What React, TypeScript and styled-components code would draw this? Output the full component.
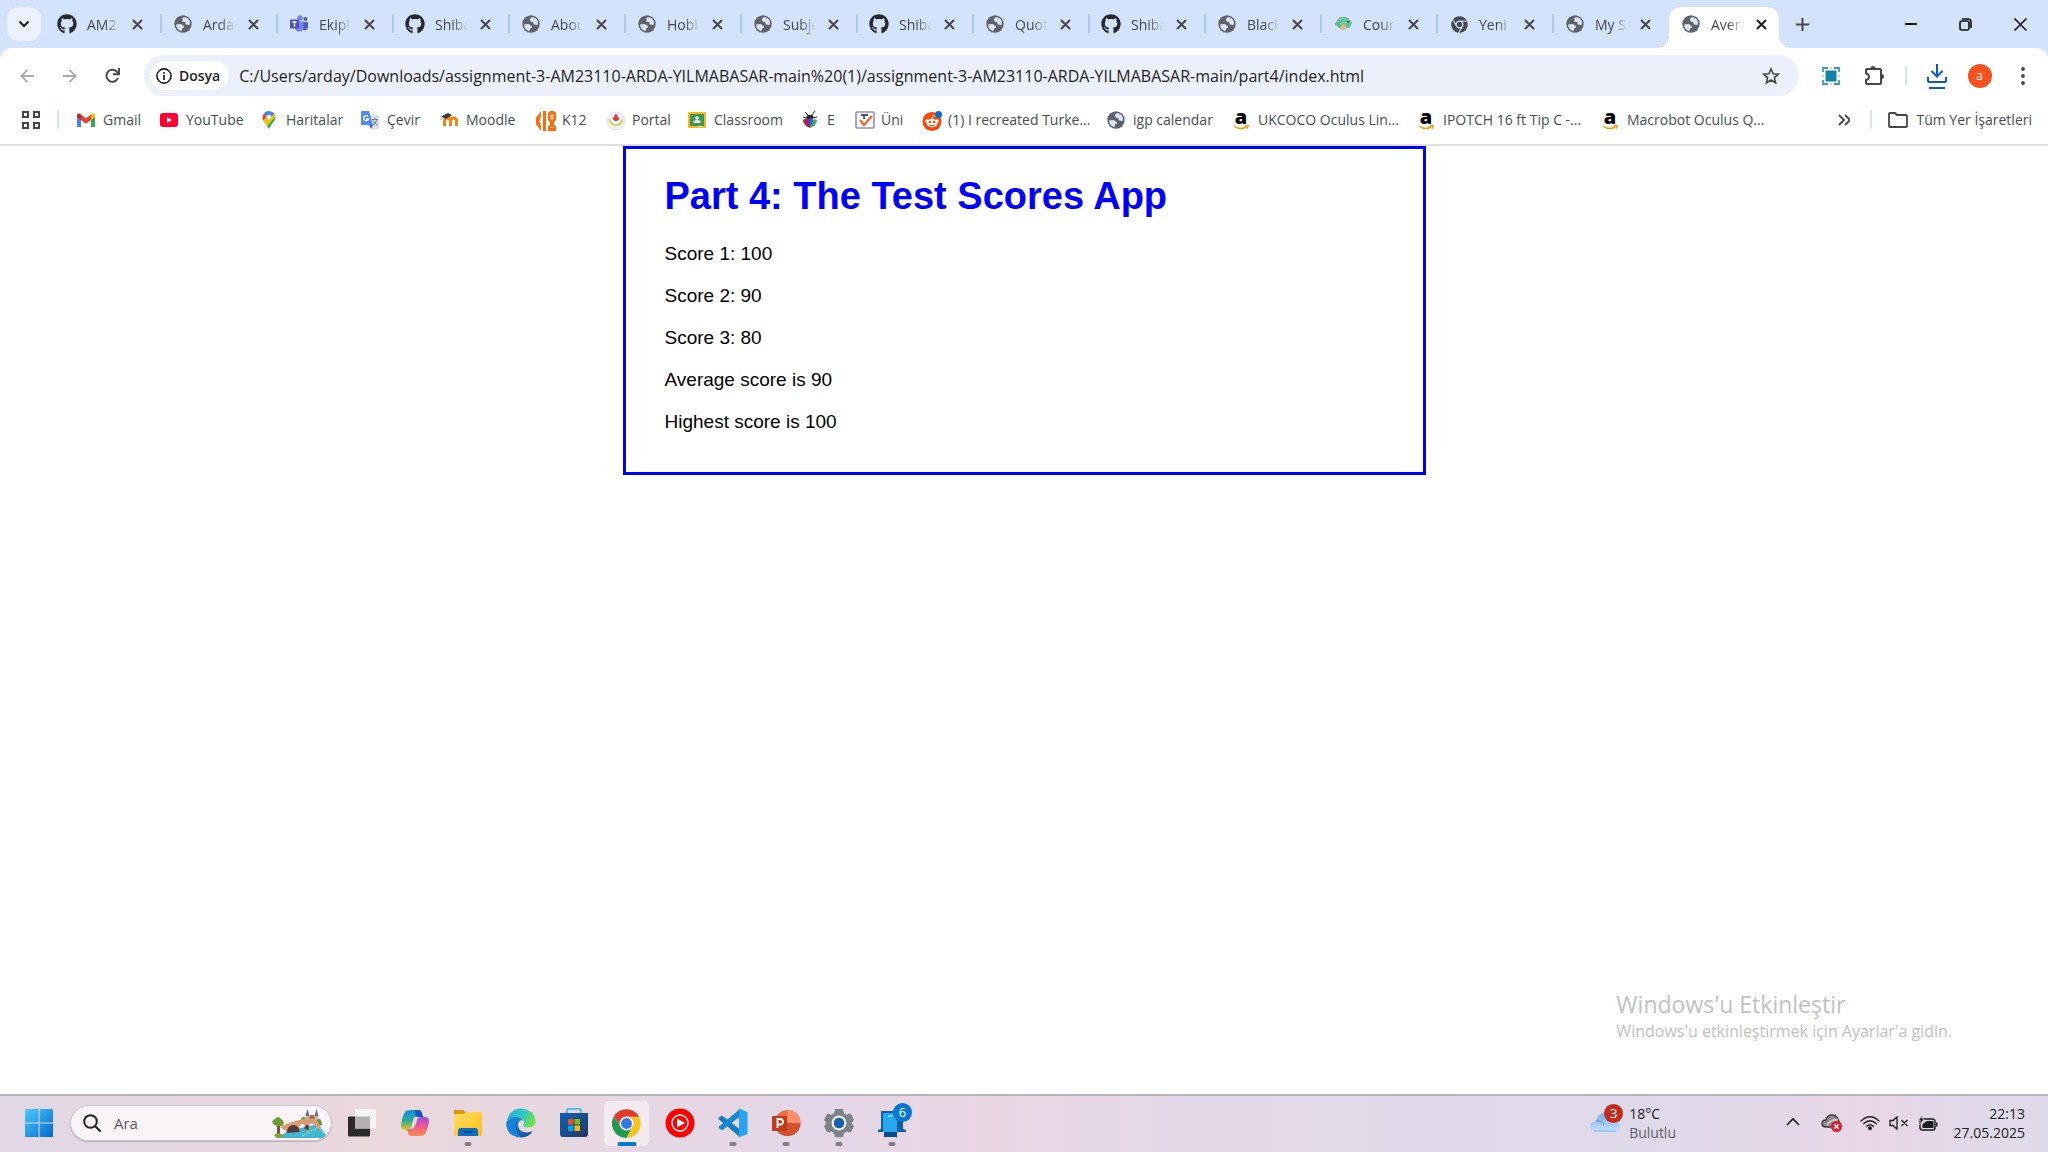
import React from "react";
import styled, { createGlobalStyle } from "styled-components";
import { FaGithub, FaChrome } from "react-icons/fa";

const GlobalStyle = createGlobalStyle`
  *, *::before, *::after { box-sizing: border-box; }
  body { margin: 0; background: #fff; font-family: "Segoe UI", "Open Sans", "Noto Sans", sans-serif; }
  button, input { font: inherit; color: inherit; border: 0; padding: 0; margin: 0; background: none; outline: none; }
  a { color: inherit; text-decoration: none; }
  svg { display: block; flex: none; }
`;

const Screen = styled.div`
  display: flex;
  flex-direction: column;
  min-height: 100vh;
`;

/* ---------- tab strip ---------- */

const TabStrip = styled.header`
  display: flex;
  height: 48px;
  background: #d3e3fd;
`;

const TabSearch = styled.button`
  display: grid;
  place-items: center;
  width: 34px;
  height: 34px;
  margin: 7px 4px 7px 7px;
  border-radius: 12px;
  background: #ebf1fe;
`;

const Tabs = styled.div`
  display: flex;
`;

const Tab = styled.div<{ $active?: boolean; $divider?: boolean }>`
  position: relative;
  display: flex;
  align-items: center;
  width: ${(p) => (p.$active ? 110 : 116)}px;
  height: ${(p) => (p.$active ? 41 : 34)}px;
  margin-top: 7px;
  padding: ${(p) => (p.$active ? "0 0 7px 12px" : "0 0 0 12px")};
  gap: 6px;
  border-radius: 12px 12px 0 0;
  background: ${(p) => (p.$active ? "#fff" : "transparent")};

  &::before,
  &::after {
    content: "";
    display: ${(p) => (p.$active || p.$divider ? "block" : "none")};
    position: absolute;
  }
  &::before {
    ${(p) =>
      p.$active
        ? "left: -12px; bottom: 0; width: 12px; height: 12px; background: radial-gradient(circle at 0 0, transparent 12px, #fff 12px);"
        : "width: 0;"}
  }
  &::after {
    ${(p) =>
      p.$active
        ? "right: -12px; bottom: 0; width: 12px; height: 12px; background: radial-gradient(circle at 100% 0, transparent 12px, #fff 12px);"
        : "right: -1px; top: 7px; width: 2px; height: 19px; border-radius: 1px; background: #a8c7fa;"}
  }
`;

const TabButton = styled.button`
  display: flex;
  align-items: center;
  gap: 10px;
`;

const IconSlot = styled.span<{ $size: number }>`
  display: grid;
  place-items: center;
  flex: none;
  width: ${(p) => p.$size}px;
  height: ${(p) => p.$size}px;
`;

const TabLabel = styled.span`
  width: 35px;
  margin-top: 2px;
  overflow: hidden;
  white-space: nowrap;
  text-align: left;
  font-size: 14px;
  line-height: 20px;
  color: #45484c;
  mask-image: linear-gradient(to right, #000 50%, transparent 92%);
`;

const CloseButton = styled.button`
  display: grid;
  place-items: center;
  width: 18px;
  height: 18px;
`;

const NewTab = styled.button`
  display: grid;
  place-items: center;
  width: 32px;
  height: 34px;
  margin: 7px auto 7px 7px;
`;

const WindowButton = styled.button`
  display: grid;
  place-items: center;
  width: 55px;
  height: 48px;
`;

/* ---------- toolbar ---------- */

const ChromeBody = styled.div`
  background: #d3e3fd;
`;

const Toolbar = styled.nav`
  display: flex;
  align-items: center;
  height: 55px;
  padding: 0 4px 0 5px;
  border-radius: 12px 12px 0 0;
  background: #fff;
`;

const ToolButton = styled.button`
  display: grid;
  place-items: center;
  width: 43px;
  height: 40px;
`;

const Omnibox = styled.div`
  display: flex;
  align-items: center;
  flex: 1;
  height: 41px;
  margin: 0 10px;
  padding: 0 14px 0 6px;
  border-radius: 21px;
  background: #ebf0fa;
`;

const SiteChip = styled.button`
  display: flex;
  align-items: center;
  gap: 7px;
  height: 29px;
  padding: 0 9px 0 6px;
  border-radius: 15px;
  background: #fff;
  font-size: 14px;
  font-weight: 600;
  color: #1f1f1f;
`;

const Address = styled.input`
  flex: 1;
  min-width: 0;
  margin-left: 10px;
  font-size: 16px;
  line-height: 24px;
  color: #1f1f1f;
`;

const StarButton = styled.button`
  display: grid;
  place-items: center;
  width: 28px;
  height: 28px;
`;

const Separator = styled.span<{ $margin: string }>`
  flex: none;
  width: 2px;
  height: 19px;
  margin: ${(p) => p.$margin};
  border-radius: 1px;
  background: #d3e3fd;
`;

const Avatar = styled.span`
  display: grid;
  place-items: center;
  width: 24px;
  height: 24px;
  border-radius: 50%;
  background: #f4511e;
  color: #fff;
  font-size: 12px;
  line-height: 24px;
`;

/* ---------- bookmarks ---------- */

const BookmarkBar = styled.nav`
  display: flex;
  align-items: center;
  height: 43px;
  padding: 0 16px 8px 20px;
  border-bottom: 2px solid #dfe0e2;
  background: #fff;
`;

const BookmarkList = styled.div`
  display: flex;
  flex: 1;
  min-width: 0;
`;

const Bookmark = styled.a<{ $width?: number }>`
  display: flex;
  align-items: center;
  gap: 8px;
  width: ${(p) => (p.$width ? p.$width + "px" : "auto")};
  white-space: nowrap;
  font-size: 14px;
  line-height: 20px;
  color: #4a4d50;
`;

const PlainButton = styled.button`
  display: grid;
  place-items: center;
  width: 22px;
  height: 22px;
`;

/* ---------- page ---------- */

const Page = styled.main`
  position: relative;
  flex: 1;
  background: #fff;
`;

const ScoreCard = styled.section`
  width: 803px;
  max-width: 100%;
  margin: 0 auto;
  padding: 25px 39px 39px;
  border: 3px solid #00f;
  font-family: Arial, "Liberation Sans", sans-serif;
  color: #000;
`;

const Title = styled.h1`
  margin: 0 0 25px;
  font-size: 38px;
  line-height: 44px;
  color: #00f;
`;

const Score = styled.p`
  margin: 0 0 20px;
  font-size: 19px;
  line-height: 22px;
  &:last-child { margin-bottom: 0; }
`;

const Watermark = styled.aside`
  position: absolute;
  right: 96px;
  bottom: 51px;
  color: #c2c2c2;
`;

const WatermarkTitle = styled.div`
  font-size: 23px;
  line-height: 30px;
`;

const WatermarkText = styled.div`
  font-size: 16px;
  line-height: 24px;
`;

/* ---------- taskbar ---------- */

const Taskbar = styled.footer`
  display: flex;
  align-items: center;
  height: 58px;
  padding: 0 23px 2px 12px;
  border-top: 2px solid #b9b1ba;
  background: linear-gradient(90deg, #e2d7e5 0%, #e5d8e1 12%, #ead8dc 19%, #e6d7e0 26%, #e4d7e8 40%, #ead6e3 48%, #e3d8e8 58%, #dfdaea 80%, #e2d8e8 86%, #e9d6e6 91%, #e1d9e9 96%, #dfdae9 100%);
`;

const TaskButton = styled.button<{ $active?: boolean }>`
  position: relative;
  display: grid;
  place-items: center;
  width: 45px;
  height: 45px;
  margin: 0 4px;
  border-radius: 5px;
  background: ${(p) => (p.$active ? "#f3ebef" : "transparent")};
`;

const Indicator = styled.span<{ $active?: boolean }>`
  position: absolute;
  left: 50%;
  bottom: 0;
  width: ${(p) => (p.$active ? 19 : 7)}px;
  height: 4px;
  border-radius: 2px;
  background: ${(p) => (p.$active ? "#0078d4" : "#847b86")};
  transform: translateX(-50%);
`;

const Badge = styled.span<{ $color: string; $top: number; $right: number }>`
  position: absolute;
  display: grid;
  place-items: center;
  top: ${(p) => p.$top}px;
  right: ${(p) => p.$right}px;
  width: 19px;
  height: 19px;
  border-radius: 50%;
  background: ${(p) => p.$color};
  color: #fff;
  font-size: 13px;
  line-height: 19px;
`;

const SearchBox = styled.label`
  display: flex;
  align-items: center;
  gap: 13px;
  width: 262px;
  height: 36px;
  margin: 0 3px 0 5px;
  padding: 0 5px 0 12px;
  border: 1px solid #d0c6d1;
  border-radius: 18px;
  background: #f8f4f8;
  box-shadow: 0 1px 1px #b9aeba;
`;

const SearchInput = styled.input`
  flex: 1;
  min-width: 0;
  font-size: 15px;
  &::placeholder { color: #5f5b60; opacity: 1; }
`;

const Weather = styled.button`
  display: flex;
  align-items: center;
  gap: 9px;
  margin-left: auto;
  text-align: left;
  font-size: 14px;
  line-height: 19px;
  color: #1d1c1e;
`;

const WeatherIcon = styled.span`
  position: relative;
  display: block;
  width: 30px;
  height: 30px;
  margin-bottom: 8px;
`;

const Muted = styled.span`
  display: block;
  color: #656068;
`;

const Tray = styled.div`
  display: flex;
  align-items: center;
  margin-left: 97px;
`;

const TrayButton = styled.button<{ $width: number }>`
  display: grid;
  place-items: center;
  width: ${(p) => p.$width}px;
  height: 40px;
`;

const Clock = styled.button`
  width: 78px;
  text-align: right;
  font-size: 14px;
  line-height: 19px;
  color: #1d1c1e;
`;

/* ---------- drawings ---------- */

const Line = ({ d, size, w = 2, color = "#474747", box = 24 }: { d: string; size: number; w?: number; color?: string; box?: number }) => (
  <svg width={size} height={size} viewBox={`0 0 ${box} ${box}`} fill="none" stroke={color} strokeWidth={w}>
    <path d={d} />
  </svg>
);

const Cross = ({ color }: { color: string }) => <Line d="M1 1 10 10 M10 1 1 10" size={11} box={11} w={2} color={color} />;

const Globe = () => (
  <svg width="18" height="18" viewBox="0 0 18 18">
    <circle cx="9" cy="9" r="8.700" fill="#5f6368" />
    <path d="M9.500 2.200 8 4l.5 2.500L11 7l1 2.500 3.500.5Q17 6 13.500 3.300 12 2 9.500 2.200z" fill="#dbe6fb" />
    <path d="M2 9.500 6.500 9l3 1.500.5 2-2 1-.500 2.700Q2.500 15 2 9.500z" fill="#dbe6fb" />
  </svg>
);

const Github = () => <FaGithub size={20} color="#24292f" />;

const Teams = () => (
  <svg width="18" height="18" viewBox="0 0 18 18">
    <circle cx="15.4" cy="4" r="2" fill="#5059c9" />
    <circle cx="10" cy="3" r="2.8" fill="#7b83eb" />
    <path d="M12 7h5q1 0 1 1v4a3.5 3.5 0 0 1-5 3z" fill="#5059c9" />
    <path d="M5 6.500h8.500v6a4.500 4.500 0 0 1-8.500 1.500z" fill="#7b83eb" />
    <rect x="0" y="4.500" width="9" height="9" rx="1" fill="#4b53bc" />
    <path d="M2.500 7h4M4.500 7v5" stroke="#fff" strokeWidth="1.300" />
  </svg>
);

const Palm = () => (
  <svg width="18" height="18" viewBox="0 0 18 18">
    <path d="M7 8h4l.5 6q-2.500 3-4.500 0z" fill="#e2b477" />
    <path d="M0 9q3-2 4-5Q9 0 14 3q1 2 4 4-1 5-4 6-3 1-2-3-2-1-4-1-1 5-3 4-1-2-5-4z" fill="#5dbb8c" />
    <path d="M4 6q4-4 9-1M6 9q3-3 8-1" stroke="#9bdcbb" fill="none" />
    <circle cx="14" cy="7" r="1" fill="#2d4b43" />
  </svg>
);

const Gmail = () => (
  <svg width="18" height="14" viewBox="0 0 18 14">
    <path d="M0 3v10q0 1 1 1h3V6z" fill="#4285f4" />
    <path d="M14 6v8h3q1 0 1-1V3z" fill="#34a853" />
    <path d="M14 1.500V7l4-3V2q-1-2.500-4-.5z" fill="#fbbc04" />
    <path d="M4 1.500V7L0 4V2Q1-.5 4 1.500z" fill="#c5221f" />
    <path d="M4 1.500 9 5.300l5-3.800V7l-5 3.800L4 7z" fill="#ea4335" />
  </svg>
);

const YouTube = () => (
  <svg width="18" height="14" viewBox="0 0 18 14">
    <rect width="18" height="14" rx="3" fill="#ff0033" />
    <path d="M7 4l5 3-5 3z" fill="#fff" />
  </svg>
);

const Pin = () => (
  <svg width="18" height="18" viewBox="0 0 18 18">
    <path d="M3.500 3.300A6.500 6.500 0 0 1 11 .400L7 5z" fill="#4285f4" />
    <path d="M3.500 3.300 7 5l-3.700 5Q1.500 6.500 3.500 3.300z" fill="#ea4335" />
    <path d="M11 .400q4 1.500 4.400 5L7 15Q5 12.500 3.300 10z" fill="#fbbc04" />
    <path d="M15.400 5.400Q16 8 13 11.500 10.500 14.500 9 18 8 16.500 7 15z" fill="#34a853" />
    <path d="M11 .400 7 5l5 0 2.500-2.500Q13 .900 11 .400z" fill="#4285f4" />
    <circle cx="9" cy="6.300" r="2.300" fill="#fff" />
  </svg>
);

const Translate = () => (
  <svg width="18" height="18" viewBox="0 0 18 18">
    <path d="M7 4h10q1 0 1 1v12q0 1-1 1h-6z" fill="#dcdfe3" />
    <path d="M8 14h4l-2 4z" fill="#3a5bcc" />
    <path d="M1 0h7l4 14H1q-1 0-1-1V1q0-1 1-1z" fill="#4c8bf5" />
    <path d="M7 5.500A2.500 2.500 0 1 0 7.500 8H5" stroke="#fff" fill="none" strokeWidth="1.300" />
    <path d="M11 8.500h6M14 7v1.500M12 14q3-2 4-5.500M12.500 9.500q1 3 4 4.500" stroke="#72808d" fill="none" />
  </svg>
);

const Moodle = () => (
  <svg width="18" height="18" viewBox="0 0 18 18">
    <path d="M4.500 15V10q0-3 3-3t3 3v5M10.500 10q0-3 3-3t3 3v5" stroke="#f98012" strokeWidth="3" fill="none" />
    <path d="M1 5.500 8 2l4 2-6 4z" fill="#3b3b3b" />
    <path d="M1 5.500V9" stroke="#b9a58f" />
  </svg>
);

const K12 = () => (
  <svg width="20" height="20" viewBox="0 0 20 20">
    <path d="M5 0v5L3.500 10 5 15v5L0 13V7zM7 0h3v20H7z" fill="#ff6d0a" />
    <path d="M14 0h4l2 2v7l-2 2v3l2 1v5h-8v-5l2-1v-3l-2-2V2z" fill="#ff6d0a" />
    <path d="M15 4h2v4h-2zM14.500 16.500h3" stroke="#fff" fill="none" />
  </svg>
);

const Portal = () => (
  <svg width="20" height="20" viewBox="0 0 20 20">
    <circle cx="10" cy="10" r="9" fill="#f2f3f6" stroke="#dfe2ea" />
    <path d="M3 8a7 7 0 1 0 14 0 9 6 0 0 1-14 0z" fill="#cfc72c" />
    <circle cx="10" cy="8" r="5.500" fill="#fff" />
    <path d="M6.500 6l1.500 1 .5-3L10 3l1.500 1 .5 3 1.500-1q0 4-3.500 4T6.500 6z" fill="#df3546" />
  </svg>
);

const Classroom = () => (
  <svg width="18" height="18" viewBox="0 0 18 18">
    <rect y="1" width="18" height="16" rx="1" fill="#f5ba16" />
    <rect x="2" y="3" width="14" height="12" fill="#3f9657" />
    <circle cx="9" cy="7" r="1.800" fill="#fff" />
    <path d="M5 12q0-3 4-3t4 3z" fill="#e2f0e6" />
    <path d="M10 15h4v1h-4z" fill="#fff" />
  </svg>
);

const Bug = () => (
  <svg width="16" height="18" viewBox="0 0 16 18">
    <path d="M3 1l4 4M13 0 9 5M1 6l4 1M15 6l-4 1" stroke="#222" />
    <ellipse cx="8" cy="6" rx="3.500" ry="2.200" fill="#222" />
    <path d="M8 17Q1 14 1 9l4-2 3 2z" fill="#b3202f" />
    <path d="M8 17 4 9l4-2z" fill="#6a2fc0" />
    <path d="M8 17V7l4 2z" fill="#2166d8" />
    <path d="M8 17l4-9 3 1q0 5-7 8z" fill="#3fae49" />
  </svg>
);

const Uni = () => (
  <svg width="20" height="18" viewBox="0 0 20 18">
    <rect x="1" y="1" width="18" height="16" rx="1" fill="#fff" stroke="#8f8fc4" strokeWidth="1.600" />
    <path d="M6 4h7M9 4v4" stroke="#4a4f92" strokeWidth="1.800" />
    <path d="M5 9l4 5 8-9" stroke="#f1672c" strokeWidth="2.400" fill="none" />
  </svg>
);

const Reddit = () => (
  <svg width="20" height="20" viewBox="0 0 20 20">
    <circle cx="10" cy="10.500" r="9.500" fill="#ff4500" />
    <circle cx="5" cy="10" r="1.700" fill="#fff" />
    <circle cx="15" cy="10" r="1.700" fill="#fff" />
    <ellipse cx="10" cy="12" rx="5.500" ry="4.300" fill="#fff" />
    <path d="M10 8l1-3.500 3 .5" stroke="#fff" fill="none" />
    <circle cx="7.900" cy="11" r="1.200" fill="#ff4500" />
    <circle cx="12.100" cy="11" r="1.200" fill="#ff4500" />
    <path d="M7.500 14q2.500 1.500 5 0" stroke="#b33b12" fill="none" />
    <circle cx="16.500" cy="3.500" r="3.500" fill="#0a6cd0" />
  </svg>
);

const AmazonMark = styled.span`
  position: relative;
  display: block;
  width: 18px;
  height: 20px;
  text-align: center;
  font-family: "Open Sans", sans-serif;
  font-size: 20px;
  font-weight: 800;
  line-height: 12px;
  color: #000;
`;

const Smile = styled.svg`
  position: absolute;
  left: 1px;
  bottom: 1px;
`;

const Amazon = () => (
  <AmazonMark>
    a
    <Smile width="16" height="5" viewBox="0 0 16 5" fill="none" stroke="#ff9900" strokeWidth="1.500">
      <path d="M1 1q6 4.500 12 1M12 .8h3l-1 3" />
    </Smile>
  </AmazonMark>
);

const Windows = () => (
  <svg width="28" height="28" viewBox="0 0 28 28">
    <defs>
      <linearGradient id="win" x1="0" y1="0" x2="1" y2="1">
        <stop offset="0" stopColor="#4ccbfb" />
        <stop offset="1" stopColor="#0067cf" />
      </linearGradient>
    </defs>
    <path d="M1 0h12.500v13.500H0V1q0-1 1-1zM14.500 0H27q1 0 1 1v12.500H14.500zM0 14.500h13.500V28H1q-1 0-1-1zM14.500 14.500H28V27q0 1-1 1H14.500z" fill="url(#win)" />
  </svg>
);

const Bridge = () => (
  <svg width="54" height="30" viewBox="0 0 54 30">
    <path d="M5 30l11-7 30-7 8 11-3 3z" fill="#43b7cf" />
    <path d="M30 28l17-9 5 7" stroke="#86dbe3" fill="none" />
    <path d="M34 8h3v8h-3zM43 8h3v8h-3zM37 10h6v6h-6z" fill="#c9b6c2" />
    <path d="M33.500 8l2-7 2 7zM42.500 8l2-7 2 7z" fill="#6c6587" />
    <path d="M36.500 11h7L42 7h-4z" fill="#b96a45" />
    <path d="M29 11q3-4 5 0v4h-5zM45 12q4-4 5 5l-4 1z" fill="#5d9a3b" />
    <path d="M8 19q12-6 24-8l13 1 4 8-5 1q0-6-4-6t-3 8h-3q0-7-4-7t-2 8H16z" fill="#d99a70" />
    <path d="M15 25q0-8 7-8 5 1 6 7zM32.500 21q0-4 2.500-4t1.500 5z" fill="#4e3b3b" />
    <path d="M5 17h3v11H5z" fill="#7d5333" />
    <path d="M1 16q-2-4 2-5 3-4 6 0 4 2 2 6-4 3-10-1z" fill="#6f9d34" />
    <path d="M2 27q5-4 10 1l-3 2H5z" fill="#84a03b" />
  </svg>
);

const TaskView = () => (
  <svg width="30" height="30" viewBox="0 0 30 30">
    <rect x="1" y="8.500" width="22" height="20" rx="1" fill="#2c2a2b" />
    <rect x="8" y="1" width="21" height="19.500" rx="1" fill="#f5f3f4" />
    <path d="M8 8.500h15v12H8z" fill="#b5b1b2" />
  </svg>
);

const Copilot = () => (
  <svg width="28" height="26" viewBox="0 0 28 26">
    <defs>
      <linearGradient id="cpA" x1="0" y1="0" x2="0" y2="1">
        <stop offset="0" stopColor="#138fe6" />
        <stop offset=".5" stopColor="#26a89a" />
        <stop offset="1" stopColor="#e0ca20" />
      </linearGradient>
      <linearGradient id="cpB" x1="0" y1="0" x2="0" y2="1">
        <stop offset="0" stopColor="#a04be8" />
        <stop offset=".5" stopColor="#ee5a92" />
        <stop offset="1" stopColor="#fb8c45" />
      </linearGradient>
    </defs>
    <path d="M10 0h8q2 0 3 3l1 4h-5l-4 0-3 11q-1 2-3 2H4q-4 0-4-5Q2 3 5 1 7 0 10 0z" fill="url(#cpA)" />
    <path d="M14 0h4q2 0 3 3l1 4h-5q-2 0-3-3z" fill="#1556c4" />
    <path d="M18 26h-8q-2 0-3-3l-1-4h5q2-1 3-3l3-8q1-1 3-1h4q4 0 4 5-2 10-5 13-2 1-5 1z" fill="url(#cpB)" />
  </svg>
);

const Folder = () => (
  <svg width="30" height="28" viewBox="0 0 30 28">
    <defs>
      <linearGradient id="fold" x1="0" y1="0" x2="1" y2="1">
        <stop offset="0" stopColor="#ffdf66" />
        <stop offset="1" stopColor="#fdbb16" />
      </linearGradient>
    </defs>
    <path d="M1 1h9l3 3H29v6H1z" fill="#dd9a08" />
    <path d="M1 5h10l2-2h15q1 0 1 1v22q0 1-1 1H2q-1 0-1-1z" fill="url(#fold)" />
    <path d="M5 27v-5q0-3 3-3h14q3 0 3 3v5z" fill="#0c6dc0" />
    <path d="M10 23h10" stroke="#08437f" strokeWidth="1.500" />
  </svg>
);

const Edge = () => (
  <svg width="30" height="30" viewBox="0 0 30 30">
    <defs>
      <linearGradient id="edgeA" x1="0" y1="0" x2="1" y2=".4">
        <stop offset="0" stopColor="#1fa9e0" />
        <stop offset=".6" stopColor="#30c8c5" />
        <stop offset="1" stopColor="#6be04b" />
      </linearGradient>
      <linearGradient id="edgeB" x1="0" y1="0" x2="1" y2="1">
        <stop offset="0" stopColor="#1e8fe0" />
        <stop offset="1" stopColor="#124a97" />
      </linearGradient>
    </defs>
    <path d="M1 14A14 14 0 0 1 15 .500q13 1 14.500 12 0 7-8 7-5 0-4-3 2-5-4-7Q6 7.500 1 14z" fill="url(#edgeA)" />
    <path d="M.500 14Q6 7 13 9.500q3 1 4 3-5-1-5 5 1 7 9 7 4 0 6-2-4 7-12 7Q2 29 .500 17z" fill="url(#edgeB)" />
    <path d="M.500 14Q7 10 9 14q-1 9 6 15.500Q2 29 .500 17z" fill="#1583dc" />
  </svg>
);

const Store = () => (
  <svg width="30" height="30" viewBox="0 0 30 30">
    <defs>
      <linearGradient id="store" x1="0" y1="0" x2="1" y2="1">
        <stop offset="0" stopColor="#0c64b8" />
        <stop offset="1" stopColor="#24365c" />
      </linearGradient>
    </defs>
    <path d="M8 6V2q0-1 1-1h12q1 0 1 1v4" stroke="#2fb5e8" strokeWidth="1.500" fill="none" />
    <path d="M1 5h28v21q0 3-3 3H4q-3 0-3-3z" fill="url(#store)" />
    <path d="M9 11h5.500v5.500H9z" fill="#f25022" />
    <path d="M15.500 11H21v5.500h-5.500z" fill="#7fba00" />
    <path d="M9 17.500h5.500V23H9z" fill="#00a4ef" />
    <path d="M15.500 17.500H21V23h-5.500z" fill="#ffb900" />
  </svg>
);

const ChromeLogo = () => (
  <svg width="29" height="29" viewBox="0 0 48 48">
    <path d="M24 13h20.800A24 24 0 0 1 24 48l9.500-18.500z" fill="#fcc31e" />
    <path d="M3.200 12A24 24 0 0 0 24 48l9.500-18.500-19 0z" fill="#219b4b" />
    <path d="M3.200 12A24 24 0 0 1 44.800 13H24l-9.500 16.500z" fill="#e33b2e" />
    <circle cx="24" cy="24" r="11.500" fill="#fff" />
    <circle cx="24" cy="24" r="9" fill="#3478e8" />
  </svg>
);

const YtMusic = () => (
  <svg width="30" height="30" viewBox="0 0 30 30">
    <circle cx="15" cy="15" r="14.500" fill="#f00" />
    <circle cx="15" cy="15" r="8" fill="none" stroke="#fff" strokeWidth="1.400" />
    <path d="M12 10.500l8 4.500-8 4.500z" fill="#fff" />
  </svg>
);

const VsCode = () => (
  <svg width="30" height="30" viewBox="0 0 30 30">
    <path d="M.800 10l2-1.800q1-.6 2 0L22 21.500V29L1 11.500q-1-.8-.2-1.500z" fill="#0f7cc4" />
    <path d="M.800 20l2 1.800q1 .6 2 0L22 8.500V1L1 18.500q-1 .8-.2 1.500z" fill="#1689d2" />
    <path d="M21 .500 29.500 4v22L21 29.500z" fill="#27a5f2" />
  </svg>
);

const PowerPoint = () => (
  <svg width="30" height="28" viewBox="0 0 30 28">
    <circle cx="16.500" cy="14" r="13" fill="#ed6c47" />
    <path d="M16.500 1a13 13 0 0 1 13 13h-13z" fill="#ff8f6b" />
    <path d="M3.500 14h26a13 13 0 0 1-26 0z" fill="#d35230" />
    <rect x="1" y="7" width="15" height="15" rx="1" fill="#c13b1b" />
    <path d="M6.500 19v-9H9q3 0 3 2.800T9 15.500H6.500" stroke="#fff" strokeWidth="1.900" fill="none" />
  </svg>
);

const Gear = () => (
  <svg width="30" height="30" viewBox="0 0 30 30">
    <path d="M11.500 1.500h7l1 4 3 1.700 4-1.200 3 6-2.700 3 2.700 3.300-3 5.700-4-1-3 1.800-1 4h-7l-1-4-3-1.800-4 1-3-5.700L3.200 15 .500 12l3-6 4 1.200 3-1.700z" fill="#7d8288" stroke="#7d8288" strokeLinejoin="round" />
    <circle cx="15" cy="15" r="7.500" fill="#e9ecef" />
    <circle cx="15" cy="15" r="5.200" fill="#1560a8" />
  </svg>
);

const PhoneLink = () => (
  <svg width="30" height="28" viewBox="0 0 30 28">
    <path d="M4 2h22v18l3 1v2H1v-2l3-1z" fill="#0e5fa8" />
    <path d="M7 22h13v6H7z" fill="#0b4a86" />
    <rect x="6" y="4" width="14" height="19" fill="#25a9ea" />
    <path d="M11 7h5" stroke="#bdeafe" />
  </svg>
);

const Cloud = () => (
  <svg width="30" height="30" viewBox="0 0 30 30">
    <defs>
      <linearGradient id="cloud" x1="0" y1="0" x2="0" y2="1">
        <stop offset="0" stopColor="#78a9ee" />
        <stop offset="1" stopColor="#c7e2fd" />
      </linearGradient>
    </defs>
    <path d="M6 28q-6 0-6-5 0-5 6-6 2-8 10-8 7 0 8 8 6 1 6 6 0 5-6 5z" fill="url(#cloud)" />
    <path d="M6 17q6-1 8 4" stroke="#5e93df" fill="none" />
    <path d="M4 27h22" stroke="#7faeef" />
  </svg>
);

const OneDrive = () => (
  <svg width="22" height="20" viewBox="0 0 22 20">
    <path d="M5 14q-4 0-4-3.500T5 7q1-5 6-5 4 0 6 4l2 5-8 3z" fill="#8d8b8e" stroke="#403d41" strokeWidth="1.500" />
    <path d="M6 12q4-6 11-5" stroke="#c9c7c9" strokeWidth="2" fill="none" />
    <circle cx="15.500" cy="13.500" r="5.500" fill="#e11d2e" />
    <path d="M13.300 11.300l4.400 4.400M17.700 11.300l-4.400 4.400" stroke="#fff" strokeWidth="1.500" />
  </svg>
);

const Wifi = () => (
  <svg width="20" height="16" viewBox="0 0 20 16" fill="none" stroke="#1d1c1e" strokeWidth="1.300" strokeLinecap="round">
    <path d="M1 6q9-8.500 18 0M3.700 8.800q6.300-6 12.600 0M6.500 11.500q3.500-3.400 7 0" />
    <circle cx="10" cy="13.300" r="1.300" fill="#1d1c1e" />
  </svg>
);

const Muffled = () => (
  <svg width="20" height="16" viewBox="0 0 20 16" fill="none" stroke="#1d1c1e" strokeWidth="1.300">
    <path d="M1 5.500h3L8 2v12l-4-3.500H1zM12.500 5l6 6M18.500 5l-6 6" />
  </svg>
);

const Battery = () => (
  <svg width="20" height="16" viewBox="0 0 20 16">
    <rect x="2" y="4" width="15" height="11" rx="2.500" fill="none" stroke="#1d1c1e" strokeWidth="1.400" />
    <path d="M4.500 13V9L9 6h6.500v7z" fill="#1d1c1e" />
    <path d="M18 7.500h1.500v4H18z" fill="#1d1c1e" />
    <path d="M4.500 0 .500 5.500h2L1.500 10l4.500-6H4z" fill="#1d1c1e" stroke="#e6d7e6" strokeWidth=".5" />
  </svg>
);

/* ---------- data ---------- */

type Entry = { label: string; icon: React.ReactNode; width?: number };

const tabs: Entry[] = [
  { label: "AM2", icon: <Github /> },
  { label: "Arda", icon: <Globe /> },
  { label: "Ekipl", icon: <Teams /> },
  { label: "Shiba", icon: <Github /> },
  { label: "Abou", icon: <Globe /> },
  { label: "Hobb", icon: <Globe /> },
  { label: "Subje", icon: <Globe /> },
  { label: "Shiba", icon: <Github /> },
  { label: "Quot", icon: <Globe /> },
  { label: "Shiba", icon: <Github /> },
  { label: "Black", icon: <Globe /> },
  { label: "Cour", icon: <Palm /> },
  { label: "Yeni", icon: <FaChrome size={17} color="#474a4e" /> },
  { label: "My S", icon: <Globe /> },
  { label: "Avera", icon: <Globe /> },
];

const bookmarks: Entry[] = [
  { label: "Gmail", icon: <Gmail />, width: 83 },
  { label: "YouTube", icon: <YouTube />, width: 100 },
  { label: "Haritalar", icon: <Pin />, width: 101 },
  { label: "Çevir", icon: <Translate />, width: 79 },
  { label: "Moodle", icon: <Moodle />, width: 96 },
  { label: "K12", icon: <K12 />, width: 70 },
  { label: "Portal", icon: <Portal />, width: 82 },
  { label: "Classroom", icon: <Classroom />, width: 113 },
  { label: "E", icon: <Bug />, width: 54 },
  { label: "Üni", icon: <Uni />, width: 67 },
  { label: "(1) I recreated Turke...", icon: <Reddit />, width: 185 },
  { label: "igp calendar", icon: <Globe />, width: 125 },
  { label: "UKCOCO Oculus Lin...", icon: <Amazon />, width: 185 },
  { label: "IPOTCH 16 ft Tip C -...", icon: <Amazon />, width: 184 },
  { label: "Macrobot Oculus Q...", icon: <Amazon />, width: 184 },
];

const apps: { name: string; icon: React.ReactNode; open?: boolean; active?: boolean; badge?: string }[] = [
  { name: "Görev görünümü", icon: <TaskView /> },
  { name: "Copilot", icon: <Copilot /> },
  { name: "Dosya Gezgini", icon: <Folder />, open: true },
  { name: "Edge", icon: <Edge /> },
  { name: "Store", icon: <Store /> },
  { name: "Chrome", icon: <ChromeLogo />, open: true, active: true },
  { name: "YouTube Music", icon: <YtMusic /> },
  { name: "Visual Studio Code", icon: <VsCode />, open: true },
  { name: "PowerPoint", icon: <PowerPoint />, open: true },
  { name: "Ayarlar", icon: <Gear />, open: true },
  { name: "Telefon Bağlantısı", icon: <PhoneLink />, open: true, badge: "6" },
];

const scores = [100, 90, 80];
const average = scores.reduce((sum, s) => sum + s, 0) / scores.length;

export default function App() {
  return (
    <Screen>
      <GlobalStyle />
      <TabStrip>
        <TabSearch aria-label="Sekmelerde ara">
          <Line d="M1.500 3.500 6 8l4.500-4.500" size={12} box={12} w={2} color="#1f1f1f" />
        </TabSearch>
        <Tabs>
          {tabs.map((tab, i) => {
            const active = i === tabs.length - 1;
            return (
              <Tab key={i} $active={active} $divider={i < tabs.length - 2}>
                <TabButton>
                  <IconSlot $size={20}>{tab.icon}</IconSlot>
                  <TabLabel>{tab.label}</TabLabel>
                </TabButton>
                <CloseButton aria-label="Kapat">
                  <Cross color={active ? "#1f1f1f" : "#474747"} />
                </CloseButton>
              </Tab>
            );
          })}
        </Tabs>
        <NewTab aria-label="Yeni sekme">
          <Line d="M6.500 0v13M0 6.500h13" size={13} box={13} w={2} />
        </NewTab>
        <WindowButton aria-label="Simge durumuna küçült">
          <Line d="M0 6h12" size={12} box={12} w={2} color="#111" />
        </WindowButton>
        <WindowButton aria-label="Geri yükle">
          <svg width="13" height="13" viewBox="0 0 13 13" fill="none" stroke="#111" strokeWidth="1.600">
            <rect x="1" y="3" width="9" height="9" rx="2" />
            <path d="M3 1h6q3 0 3 3v6" />
          </svg>
        </WindowButton>
        <WindowButton aria-label="Pencereyi kapat">
          <Line d="M.500 .500 12 12M12 .500 .500 12" size={13} box={12.5} w={1.5} color="#111" />
        </WindowButton>
      </TabStrip>

      <ChromeBody>
        <Toolbar>
          <ToolButton aria-label="Geri">
            <Line d="M14 7H1M7.500 .800 1.300 7l6.200 6.200" size={14} box={14} w={1.8} color="#a9abae" />
          </ToolButton>
          <ToolButton aria-label="İleri">
            <Line d="M0 7h13M6.500 .800 12.700 7l-6.200 6.200" size={14} box={14} w={1.8} color="#a9abae" />
          </ToolButton>
          <ToolButton aria-label="Yenile">
            <Line d="M13 10A6 6 0 1 1 12.500 4.500L13.500 6M14 0v6.300H8" size={15} box={15} w={1.9} />
          </ToolButton>
          <Omnibox>
            <SiteChip>
              <svg width="16" height="16" viewBox="0 0 16 16">
                <circle cx="8" cy="8" r="7.100" fill="none" stroke="#1f1f1f" strokeWidth="1.600" />
                <path d="M8 7v5M8 4v1.800" stroke="#1f1f1f" strokeWidth="1.700" />
              </svg>
              Dosya
            </SiteChip>
            <Address
              aria-label="Adres"
              defaultValue="C:/Users/arday/Downloads/assignment-3-AM23110-ARDA-YILMABASAR-main%20(1)/assignment-3-AM23110-ARDA-YILMABASAR-main/part4/index.html"
            />
            <StarButton aria-label="Yer işareti ekle">
              <Line d="M9 1.800l2.100 4.900 5.300.4-4 3.500 1.200 5.200L9 13l-4.600 2.800 1.200-5.200-4-3.500 5.300-.4z" size={18} box={18} w={1.6} />
            </StarButton>
          </Omnibox>
          <ToolButton aria-label="Ekran görüntüsü">
            <svg width="18" height="18" viewBox="0 0 18 18">
              <path d="M1 5V1h5M12 1h5v4M17 13v4h-5M6 17H1v-4" fill="none" stroke="#3a9cba" strokeWidth="1.800" />
              <path d="M8 1h2M8 17h2M1 8v2M17 8v2" fill="none" stroke="#a6d3e2" strokeWidth="1.600" />
              <path d="M3.500 3.500h11v11h-11z" fill="#1583a9" />
            </svg>
          </ToolButton>
          <ToolButton aria-label="Uzantılar">
            <svg width="20" height="20" viewBox="0 0 20 20">
              <path d="M2 4.500V4q0-1 1-1h13q1 0 1 1v13q0 1-1 1H3q-1 0-1-1v-3q3-.5 3-3.200T2 7.500z" fill="none" stroke="#474747" strokeWidth="2" strokeLinejoin="round" />
              <path d="M6.500 2.500q0-2.500 2.500-2.500t2.500 2.500zM17.500 8q2.500 0 2.500 2.500t-2.500 2.500z" fill="#474747" />
            </svg>
          </ToolButton>
          <Separator $margin="0 8px 0 10px" />
          <ToolButton aria-label="İndirilenler">
            <svg width="20" height="26" viewBox="0 0 20 26" fill="none" stroke="#0b57d0" strokeWidth="2">
              <path d="M10 1v12M4.500 8l5.500 5.500L15.500 8M1 14v4q0 1 1 1h16q1 0 1-1v-4M2 25h16" />
            </svg>
          </ToolButton>
          <ToolButton aria-label="Profil">
            <Avatar>a</Avatar>
          </ToolButton>
          <ToolButton aria-label="Menü">
            <svg width="4" height="18" viewBox="0 0 4 18" fill="#474747">
              <circle cx="2" cy="2" r="1.900" />
              <circle cx="2" cy="9" r="1.900" />
              <circle cx="2" cy="16" r="1.900" />
            </svg>
          </ToolButton>
        </Toolbar>

        <BookmarkBar>
          <PlainButton aria-label="Uygulamalar">
            <Line d="M1 1h5v5H1zM12 1h5v5h-5zM1 12h5v5H1zM12 12h5v5h-5z" size={18} box={18} w={2} />
          </PlainButton>
          <Separator $margin="0 18px 0 15px" />
          <BookmarkList>
            {bookmarks.map((b) => (
              <Bookmark key={b.label} href="#" $width={b.width}>
                <IconSlot $size={18}>{b.icon}</IconSlot>
                {b.label}
              </Bookmark>
            ))}
          </BookmarkList>
          <PlainButton aria-label="Diğer yer işaretleri">
            <Line d="M1 1l5 5-5 5M7 1l5 5-5 5" size={12} box={12} w={1.8} />
          </PlainButton>
          <Separator $margin="0 16px 0 15px" />
          <Bookmark href="#">
            <svg width="20" height="16" viewBox="0 0 20 16" fill="none" stroke="#474747" strokeWidth="1.800">
              <path d="M1 13V2q0-1 1-1h5l2 2h9q1 0 1 1v10q0 1-1 1H2q-1 0-1-1z" />
            </svg>
            Tüm Yer İşaretleri
          </Bookmark>
        </BookmarkBar>
      </ChromeBody>

      <Page>
        <ScoreCard>
          <Title>Part 4: The Test Scores App</Title>
          {scores.map((s, i) => (
            <Score key={i}>{`Score ${i + 1}: ${s}`}</Score>
          ))}
          <Score>{`Average score is ${average}`}</Score>
          <Score>{`Highest score is ${Math.max(...scores)}`}</Score>
        </ScoreCard>
        <Watermark>
          <WatermarkTitle>Windows'u Etkinleştir</WatermarkTitle>
          <WatermarkText>Windows'u etkinleştirmek için Ayarlar'a gidin.</WatermarkText>
        </Watermark>
      </Page>

      <Taskbar>
        <TaskButton aria-label="Başlat">
          <Windows />
        </TaskButton>
        <SearchBox>
          <svg width="18" height="18" viewBox="0 0 18 18" fill="none" stroke="#222" strokeWidth="2" strokeLinecap="round">
            <circle cx="7.500" cy="7.500" r="6.300" />
            <path d="M12.300 12.300 17 17" />
          </svg>
          <SearchInput aria-label="Ara" placeholder="Ara" />
          <Bridge />
        </SearchBox>
        {apps.map((app) => (
          <TaskButton key={app.name} aria-label={app.name} $active={app.active}>
            {app.icon}
            {app.open && <Indicator $active={app.active} />}
            {app.badge && (
              <Badge $color="#0078d4" $top={2} $right={2}>
                {app.badge}
              </Badge>
            )}
          </TaskButton>
        ))}
        <Weather>
          <WeatherIcon>
            <Cloud />
            <Badge $color="#c42b1c" $top={0} $right={-3}>
              3
            </Badge>
          </WeatherIcon>
          <span>
            18°C
            <Muted>Bulutlu</Muted>
          </span>
        </Weather>
        <Tray>
          <TrayButton $width={40} aria-label="Gizli simgeleri göster">
            <Line d="M1 9l6-6 6 6" size={14} box={14} w={1.6} color="#1d1c1e" />
          </TrayButton>
          <TrayButton $width={38} aria-label="OneDrive">
            <OneDrive />
          </TrayButton>
          <TrayButton $width={38} aria-label="Ağ">
            <Wifi />
          </TrayButton>
          <TrayButton $width={20} aria-label="Ses">
            <Muffled />
          </TrayButton>
          <TrayButton $width={38} aria-label="Pil">
            <Battery />
          </TrayButton>
          <Clock>
            22:13
            <br />
            27.05.2025
          </Clock>
        </Tray>
      </Taskbar>
    </Screen>
  );
}
